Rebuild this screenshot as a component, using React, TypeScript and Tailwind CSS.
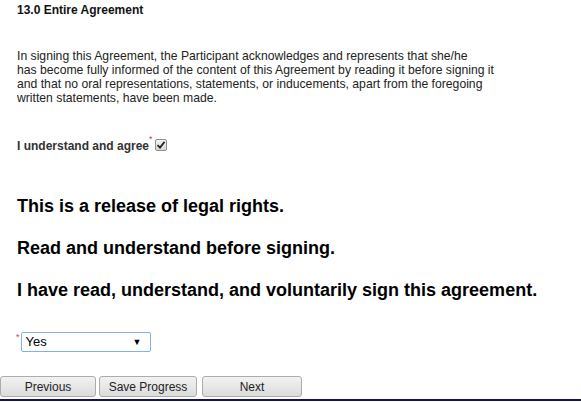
import React from "react";

export default function App() {
  return (
    <div className="w-[581px] h-[402px] bg-white overflow-hidden flex flex-col font-['Liberation_Sans',Arial,sans-serif] text-[12px] leading-[14px] text-[#222]">
      <div className="pl-[17px] pt-[3px] flex flex-col">
        <h2 className="font-bold text-[12px] leading-[14px] text-[#111]">13.0 Entire Agreement</h2>
        <p className="mt-[32px] w-[500px] text-[12.2px] leading-[14px] text-[#222]">
          In signing this Agreement, the Participant acknowledges and represents that she/he
          <br />
          has become fully informed of the content of this Agreement by reading it before signing it
          <br />
          and that no oral representations, statements, or inducements, apart from the foregoing
          <br />
          written statements, have been made.
        </p>
        <div className="mt-[34px] flex items-center h-[14px]">
          <span className="font-bold text-[#333]">I understand and agree</span>
          <span className="text-[#d0306a] text-[9px] leading-[9px] self-start -mt-[4px]">*</span>
          <span className="ml-[2px] -mt-[2px] w-[12px] h-[12px] border border-[#8f8f8f] rounded-[2px] bg-gradient-to-b from-[#f4f4f4] to-[#d8d8d8] flex items-center justify-center">
            <svg width="10" height="10" viewBox="0 0 10 10">
              <path d="M1.5 5.2 L4 7.6 L8.6 1.8" fill="none" stroke="#222" strokeWidth="1.8" />
            </svg>
          </span>
        </div>
        <div className="mt-[42px] flex flex-col gap-[20px] text-black font-bold text-[18px] leading-[22px]">
          <h3>This is a release of legal rights.</h3>
          <h3>Read and understand before signing.</h3>
          <h3>I have read, understand, and voluntarily sign this agreement.</h3>
        </div>
        <div className="mt-[31px] flex items-start">
          <span className="text-[#d0306a] text-[9px] leading-[9px] -ml-[1px] mt-[1px]">*</span>
          <div className="ml-[1px] w-[130px] h-[20px] border border-[#7eb4ea] rounded-[2px] bg-white flex items-center justify-between pl-[4px] pr-[8px] text-black text-[13px]">
            <span>Yes</span>
            <span className="text-[9px]">▼</span>
          </div>
        </div>
      </div>
      <div className="mt-[24px] flex items-start">
        <button className="w-[96px] h-[21px] border border-[#acacac] rounded-[3px] bg-gradient-to-b from-[#f2f2f2] to-[#dcdcdc] text-[12px] text-[#222]">Previous</button>
        <button className="ml-[3px] w-[98px] h-[21px] border border-[#acacac] rounded-[3px] bg-gradient-to-b from-[#f2f2f2] to-[#dcdcdc] text-[12px] text-[#222]">Save Progress</button>
        <button className="ml-[5px] w-[100px] h-[21px] border border-[#acacac] rounded-[3px] bg-gradient-to-b from-[#f2f2f2] to-[#dcdcdc] text-[12px] text-[#222]">Next</button>
      </div>
      <div className="mt-[2px] h-[2px] w-full bg-[#14144e]" />
    </div>
  );
}
